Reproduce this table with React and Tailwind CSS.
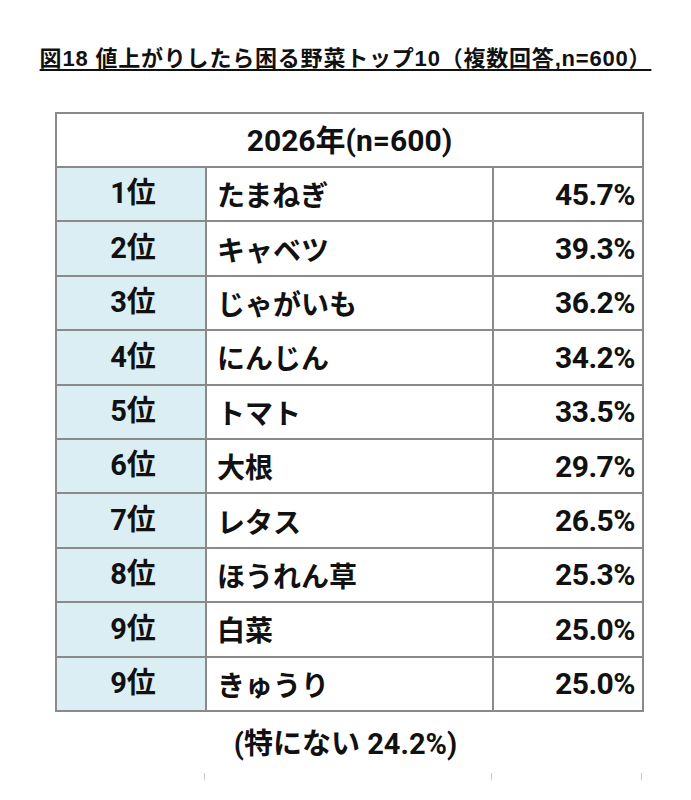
const rows = [
  ["1位", "たまねぎ", "45.7%"],
  ["2位", "キャベツ", "39.3%"],
  ["3位", "じゃがいも", "36.2%"],
  ["4位", "にんじん", "34.2%"],
  ["5位", "トマト", "33.5%"],
  ["6位", "大根", "29.7%"],
  ["7位", "レタス", "26.5%"],
  ["8位", "ほうれん草", "25.3%"],
  ["9位", "白菜", "25.0%"],
  ["9位", "きゅうり", "25.0%"],
];

// digits in the chart use a narrow face, kana/kanji fall through to Noto
const narrow = "font-['Roboto','Noto_Sans_CJK_JP',sans-serif]";

export default function App() {
  return (
    <div className="w-[691px] h-[800px] bg-white text-[#111] font-['Noto_Sans_CJK_JP',sans-serif]">
      <div className="pt-[46px] flex justify-center">
        <h1 className="text-[22px] leading-[25px] font-bold underline underline-offset-[3px] decoration-[1.5px] font-['Liberation_Sans','Noto_Sans_CJK_JP',sans-serif] tracking-[0.8px]">
          図18 値上がりしたら困る野菜トップ10（複数回答,n=600）
        </h1>
      </div>

      <div className="mt-[41px] ml-[55px] w-[589px] grid grid-cols-[148px_285px_148px] gap-[2px] p-[2px] bg-[#8a8a8a]">
        <div className={`col-span-3 h-[52px] bg-white flex items-center justify-center text-[30px] font-bold ${narrow}`}>
          2026年(n=600)
        </div>
        {rows.map(([rank, name, pct], i) => (
          <div key={i} className="contents">
            <div className={`h-[52.4px] bg-[#daeef3] flex items-center justify-center pl-[4px] text-[29px] font-bold ${narrow}`}>
              {rank}
            </div>
            <div className="h-[52.4px] bg-white flex items-center pl-[10px] text-[28px] font-bold">
              {name}
            </div>
            <div className={`h-[52.4px] bg-white flex items-center justify-end pr-[7px] text-[30px] font-bold tracking-[-0.5px] ${narrow}`}>
              {pct}
            </div>
          </div>
        ))}
      </div>

      <div className={`mt-[12px] flex justify-center text-[29px] font-bold leading-[40px] ${narrow}`}>
        (特にない 24.2%)
      </div>

      <div className="mt-[9px] ml-[55px] w-[589px] grid grid-cols-[150px_287px_150px]">
        <div className="h-[7px] border-r border-[#c8c8c8]" />
        <div className="h-[7px] border-r border-[#c8c8c8]" />
        <div className="h-[7px] border-r border-[#c8c8c8]" />
      </div>
    </div>
  );
}
